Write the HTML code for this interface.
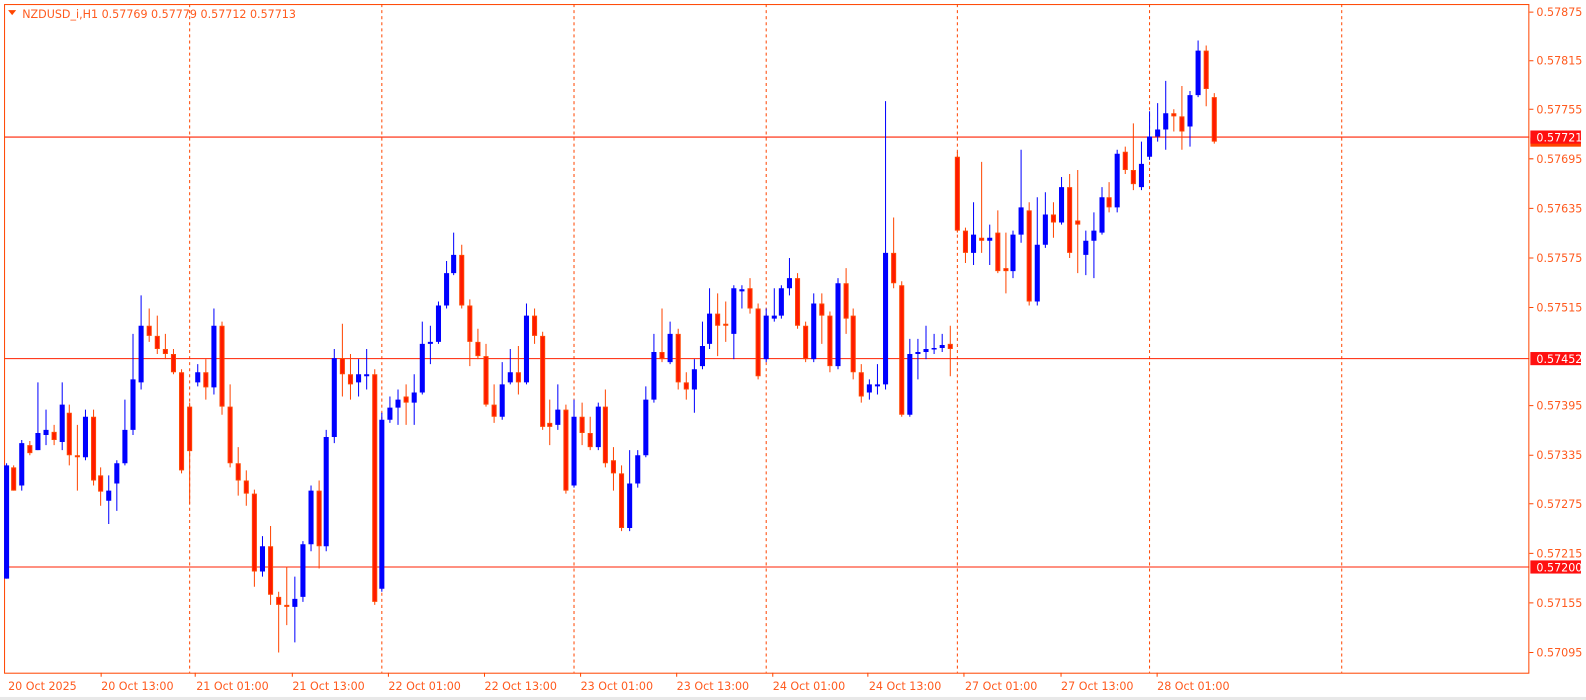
<!DOCTYPE html>
<html><head><meta charset="utf-8"><style>
html,body{margin:0;padding:0;background:#fff;width:1586px;height:700px;overflow:hidden}
svg{display:block}
text{font-family:"DejaVu Sans","Liberation Sans",sans-serif;font-size:11px;fill:#ff5a1e}
</style></head><body>
<svg width="1586" height="700" viewBox="0 0 1568 692" preserveAspectRatio="none" xmlns="http://www.w3.org/2000/svg">
<rect x="0" y="0" width="1568" height="692" fill="#fff"/>
<rect x="0" y="689" width="1568" height="3" fill="#e8e8e8"/>
<g stroke="#ff4500" stroke-width="1" stroke-dasharray="3,3">
<path d="M187.5 4V665M377.5 4V665M567.5 4V665M757.5 4V665M946.5 4V665M1136.5 4V665M1326.5 4V665"/>
</g>
<g stroke="#ff2000" stroke-width="1">
<path d="M4 135.5H1512M4 354.5H1512M4 560.5H1512"/>
</g>
<rect x="4.5" y="4.5" width="1507" height="661" fill="none" stroke="#ff4500" stroke-width="1"/>
<g stroke="#ff4500"><path d="M1512 12h4M1512 60h4M1512 108h4M1512 157h4M1512 206h4M1512 255h4M1512 304h4M1512 401h4M1512 450h4M1512 498h4M1512 547h4M1512 596h4M1512 645h4"/></g>
<g>
<text x="1519" y="16">0.57875</text><text x="1519" y="64">0.57815</text><text x="1519" y="112">0.57755</text>
<text x="1519" y="161">0.57695</text><text x="1519" y="210">0.57635</text><text x="1519" y="259">0.57575</text>
<text x="1519" y="308">0.57515</text><text x="1519" y="405">0.57395</text><text x="1519" y="454">0.57335</text>
<text x="1519" y="502">0.57275</text><text x="1519" y="551">0.57215</text><text x="1519" y="600">0.57155</text>
<text x="1519" y="649">0.57095</text>
</g>
<rect x="1513" y="136" width="50" height="9" fill="#ff4500"/>
<rect x="1513" y="129" width="50" height="13" fill="#ff1010"/>
<text x="1519" y="140" style="fill:#fff">0.57721</text>
<rect x="1513" y="348" width="50" height="13" fill="#ff1010"/>
<text x="1519" y="359" style="fill:#fff">0.57452</text>
<rect x="1513" y="554" width="50" height="13" fill="#ff1010"/>
<text x="1519" y="565" style="fill:#fff">0.57200</text>
<g stroke="#ff4500"><path d="M100 665v4M193 665v4M289 665v4M384 665v4M479 665v4M574 665v4M669 665v4M764 665v4M858 665v4M953 665v4M1049 665v4M1144 665v4"/></g>
<g>
<text x="8" y="682">20 Oct 2025</text><text x="100" y="682">20 Oct 13:00</text><text x="194" y="682">21 Oct 01:00</text>
<text x="289" y="682">21 Oct 13:00</text><text x="384" y="682">22 Oct 01:00</text><text x="479" y="682">22 Oct 13:00</text>
<text x="574" y="682">23 Oct 01:00</text><text x="669" y="682">23 Oct 13:00</text><text x="764" y="682">24 Oct 01:00</text>
<text x="859" y="682">24 Oct 13:00</text><text x="954" y="682">27 Oct 01:00</text><text x="1049" y="682">27 Oct 13:00</text>
<text x="1144" y="682">28 Oct 01:00</text>
</g>
<path d="M8 10h8l-4 5z" fill="#ff4500"/>
<text x="22" y="18">NZDUSD_i,H1  0.57769 0.57779 0.57712 0.57713</text>

<!-- blue wicks -->
<path fill="none" stroke="#0000ff" stroke-width="1" d="M6.5 458V572M21.5 435V485M37.5 378V445M45.5 405V440M61.5 378V445M84.5 405V455M107.5 470V518M115.5 455V505M123.5 395V460M131.5 330V430M139.5 292V385M195.5 360V382M211.5 305V390M259.5 530V570M291.5 570V635M299.5 535V595M307.5 480V545M322.5 425V545M330.5 345V438M354.5 355V392M362.5 345V385M377.5 408V585M385.5 392V418M393.5 385V420M409.5 370V420M417.5 318V390M425.5 322V360M433.5 298V340M441.5 258V305M448.5 230V272M496.5 358V415M504.5 345V380M520.5 300V380M551.5 380V425M567.5 395V482M591.5 398V445M622.5 445V525M630.5 445V482M638.5 382V452M646.5 330V398M662.5 318V360M686.5 355V408M694.5 318V365M701.5 285V345M725.5 282V355M733.5 282V305M757.5 305V358M765.5 285V318M772.5 282V315M780.5 255V292M804.5 290V358M828.5 275V365M859.5 375V395M867.5 360V390M875.5 100V385M899.5 335V412M907.5 335V375M915.5 322V355M923.5 330V350M931.5 330V348M962.5 200V262M978.5 222V262M1001.5 228V275M1009.5 148V240M1025.5 195V302M1033.5 190V245M1049.5 175V222M1073.5 228V272M1081.5 210V275M1089.5 185V232M1104.5 148V210M1128.5 140V188M1136.5 110V158M1144.5 102V140M1152.5 80V148M1176.5 90V145M1184.5 40V96"/>
<!-- blue bodies -->
<path fill="#0000ff" d="M4 460h5v112h-5zM19 438h5v42h-5zM35 428h5v17h-5zM43 425h5v5h-5zM59 400h5v37h-5zM82 412h5v40h-5zM105 485h5v10h-5zM113 458h5v20h-5zM121 425h5v33h-5zM129 375h5v50h-5zM137 322h5v56h-5zM193 368h5v10h-5zM209 322h5v61h-5zM257 540h5v25h-5zM289 592h5v8h-5zM297 538h5v52h-5zM305 485h5v53h-5zM320 432h5v108h-5zM328 354h5v78h-5zM352 370h5v8h-5zM360 370h5v2h-5zM375 415h5v167h-5zM383 403h5v12h-5zM391 395h5v8h-5zM407 388h5v10h-5zM415 340h5v48h-5zM423 338h5v2h-5zM431 302h5v36h-5zM439 270h5v32h-5zM446 252h5v18h-5zM494 380h5v32h-5zM502 368h5v10h-5zM518 312h5v66h-5zM549 405h5v15h-5zM565 412h5v68h-5zM589 402h5v40h-5zM620 478h5v44h-5zM628 450h5v28h-5zM636 395h5v55h-5zM644 348h5v47h-5zM660 330h5v28h-5zM684 365h5v20h-5zM692 342h5v20h-5zM699 310h5v30h-5zM723 285h5v45h-5zM731 286h5v2h-5zM755 312h5v43h-5zM763 312h5v3h-5zM770 285h5v27h-5zM778 275h5v10h-5zM802 300h5v55h-5zM826 280h5v82h-5zM857 380h5v8h-5zM865 380h5v2h-5zM873 250h5v130h-5zM897 350h5v60h-5zM905 348h5v2h-5zM913 345h5v3h-5zM921 344h5v1.5h-5zM929 341h5v3h-5zM960 232h5v18h-5zM976 235h5v3h-5zM999 232h5v36h-5zM1007 205h5v27h-5zM1023 242h5v56h-5zM1031 212h5v30h-5zM1047 185h5v35h-5zM1071 238h5v14h-5zM1079 228h5v10h-5zM1087 195h5v35h-5zM1102 152h5v53h-5zM1126 162h5v23h-5zM1134 135h5v20h-5zM1142 128h5v7h-5zM1150 112h5v16h-5zM1174 94h5v31h-5zM1182 50h5v44h-5z"/>
<!-- red wicks -->
<path fill="none" stroke="#ff4500" stroke-width="1" d="M13.5 460V485M29.5 436V450M53.5 420V440M68.5 400V460M76.5 420V485M92.5 405V480M99.5 462V500M147.5 305V338M155.5 312V350M163.5 330V355M171.5 345V370M179.5 365V468M187.5 398V498M203.5 355V395M219.5 318V410M227.5 380V462M235.5 442V490M243.5 465V500M251.5 484V580M267.5 520V598M275.5 585V645M283.5 560V618M315.5 475V562M338.5 320V392M346.5 350V395M370.5 365V598M401.5 380V420M456.5 242V305M464.5 296V362M472.5 325V355M480.5 340V402M488.5 380V418M512.5 342V390M528.5 305V340M536.5 328V425M543.5 395V440M559.5 400V488M575.5 398V440M583.5 412V445M598.5 385V462M606.5 442V485M614.5 460V525M654.5 305V358M670.5 325V385M678.5 368V395M709.5 290V352M717.5 298V338M741.5 275V310M749.5 300V375M788.5 270V325M796.5 318V358M812.5 290V340M820.5 308V368M836.5 265V330M843.5 305V375M851.5 360V398M883.5 215V285M891.5 278V412M939.5 322V372M946.5 150V230M954.5 225V260M970.5 160V250M986.5 208V270M994.5 230V290M1017.5 200V302M1041.5 200V235M1057.5 172V255M1065.5 168V270M1096.5 180V210M1112.5 145V172M1120.5 122V188M1160.5 108V130M1168.5 85V148M1192.5 45V105M1200.5 92V142"/>
<!-- red bodies -->
<path fill="#ff1a00" stroke="#ff4500" stroke-width="1" d="M11.5 462.5h4v22h-4zM27.5 440.5h4v7h-4zM51.5 427.5h4v7h-4zM66.5 408.5h4v41h-4zM74.5 450.5h4v1h-4zM90.5 412.5h4v62h-4zM97.5 470.5h4v15h-4zM145.5 322.5h4v9h-4zM153.5 332.5h4v12h-4zM161.5 345.5h4v4h-4zM169.5 350.5h4v17h-4zM177.5 368.5h4v96h-4zM185.5 402.5h4v43h-4zM201.5 368.5h4v14h-4zM217.5 322.5h4v79h-4zM225.5 402.5h4v55h-4zM233.5 458.5h4v16h-4zM241.5 475.5h4v12h-4zM249.5 488.5h4v76h-4zM265.5 540.5h4v47h-4zM273.5 590.5h4v7h-4zM281.5 598.5h4v1h-4zM313.5 485.5h4v54h-4zM336.5 354.5h4v15h-4zM344.5 370.5h4v9h-4zM368.5 370.5h4v224h-4zM399.5 392.5h4v5h-4zM454.5 252.5h4v49h-4zM462.5 302.5h4v35h-4zM470.5 338.5h4v13h-4zM478.5 352.5h4v47h-4zM486.5 400.5h4v11h-4zM510.5 368.5h4v9h-4zM526.5 312.5h4v19h-4zM534.5 332.5h4v89h-4zM541.5 418.5h4v3h-4zM557.5 405.5h4v79h-4zM573.5 412.5h4v15h-4zM581.5 428.5h4v13h-4zM596.5 402.5h4v55h-4zM604.5 455.5h4v12h-4zM612.5 468.5h4v53h-4zM652.5 348.5h4v6h-4zM668.5 330.5h4v47h-4zM676.5 378.5h4v6h-4zM707.5 310.5h4v11h-4zM715.5 320.5h4v1h-4zM739.5 285.5h4v19h-4zM747.5 305.5h4v66h-4zM786.5 275.5h4v46h-4zM794.5 322.5h4v32h-4zM810.5 300.5h4v11h-4zM818.5 312.5h4v49h-4zM834.5 280.5h4v34h-4zM841.5 312.5h4v55h-4zM849.5 368.5h4v23h-4zM881.5 250.5h4v29h-4zM889.5 282.5h4v127h-4zM937.5 340.5h4v4h-4zM944.5 155.5h4v72h-4zM952.5 228.5h4v21h-4zM968.5 235.5h4v2h-4zM984.5 230.5h4v37h-4zM992.5 265.5h4v2h-4zM1015.5 208.5h4v89h-4zM1039.5 212.5h4v7h-4zM1055.5 185.5h4v64h-4zM1063.5 218.5h4v3h-4zM1094.5 195.5h4v9h-4zM1110.5 150.5h4v17h-4zM1118.5 168.5h4v13h-4zM1158.5 112.5h4v2h-4zM1166.5 115.5h4v14h-4zM1190.5 50.5h4v37h-4zM1198.5 96.5h4v43h-4z"/>
</svg>
</body></html>
